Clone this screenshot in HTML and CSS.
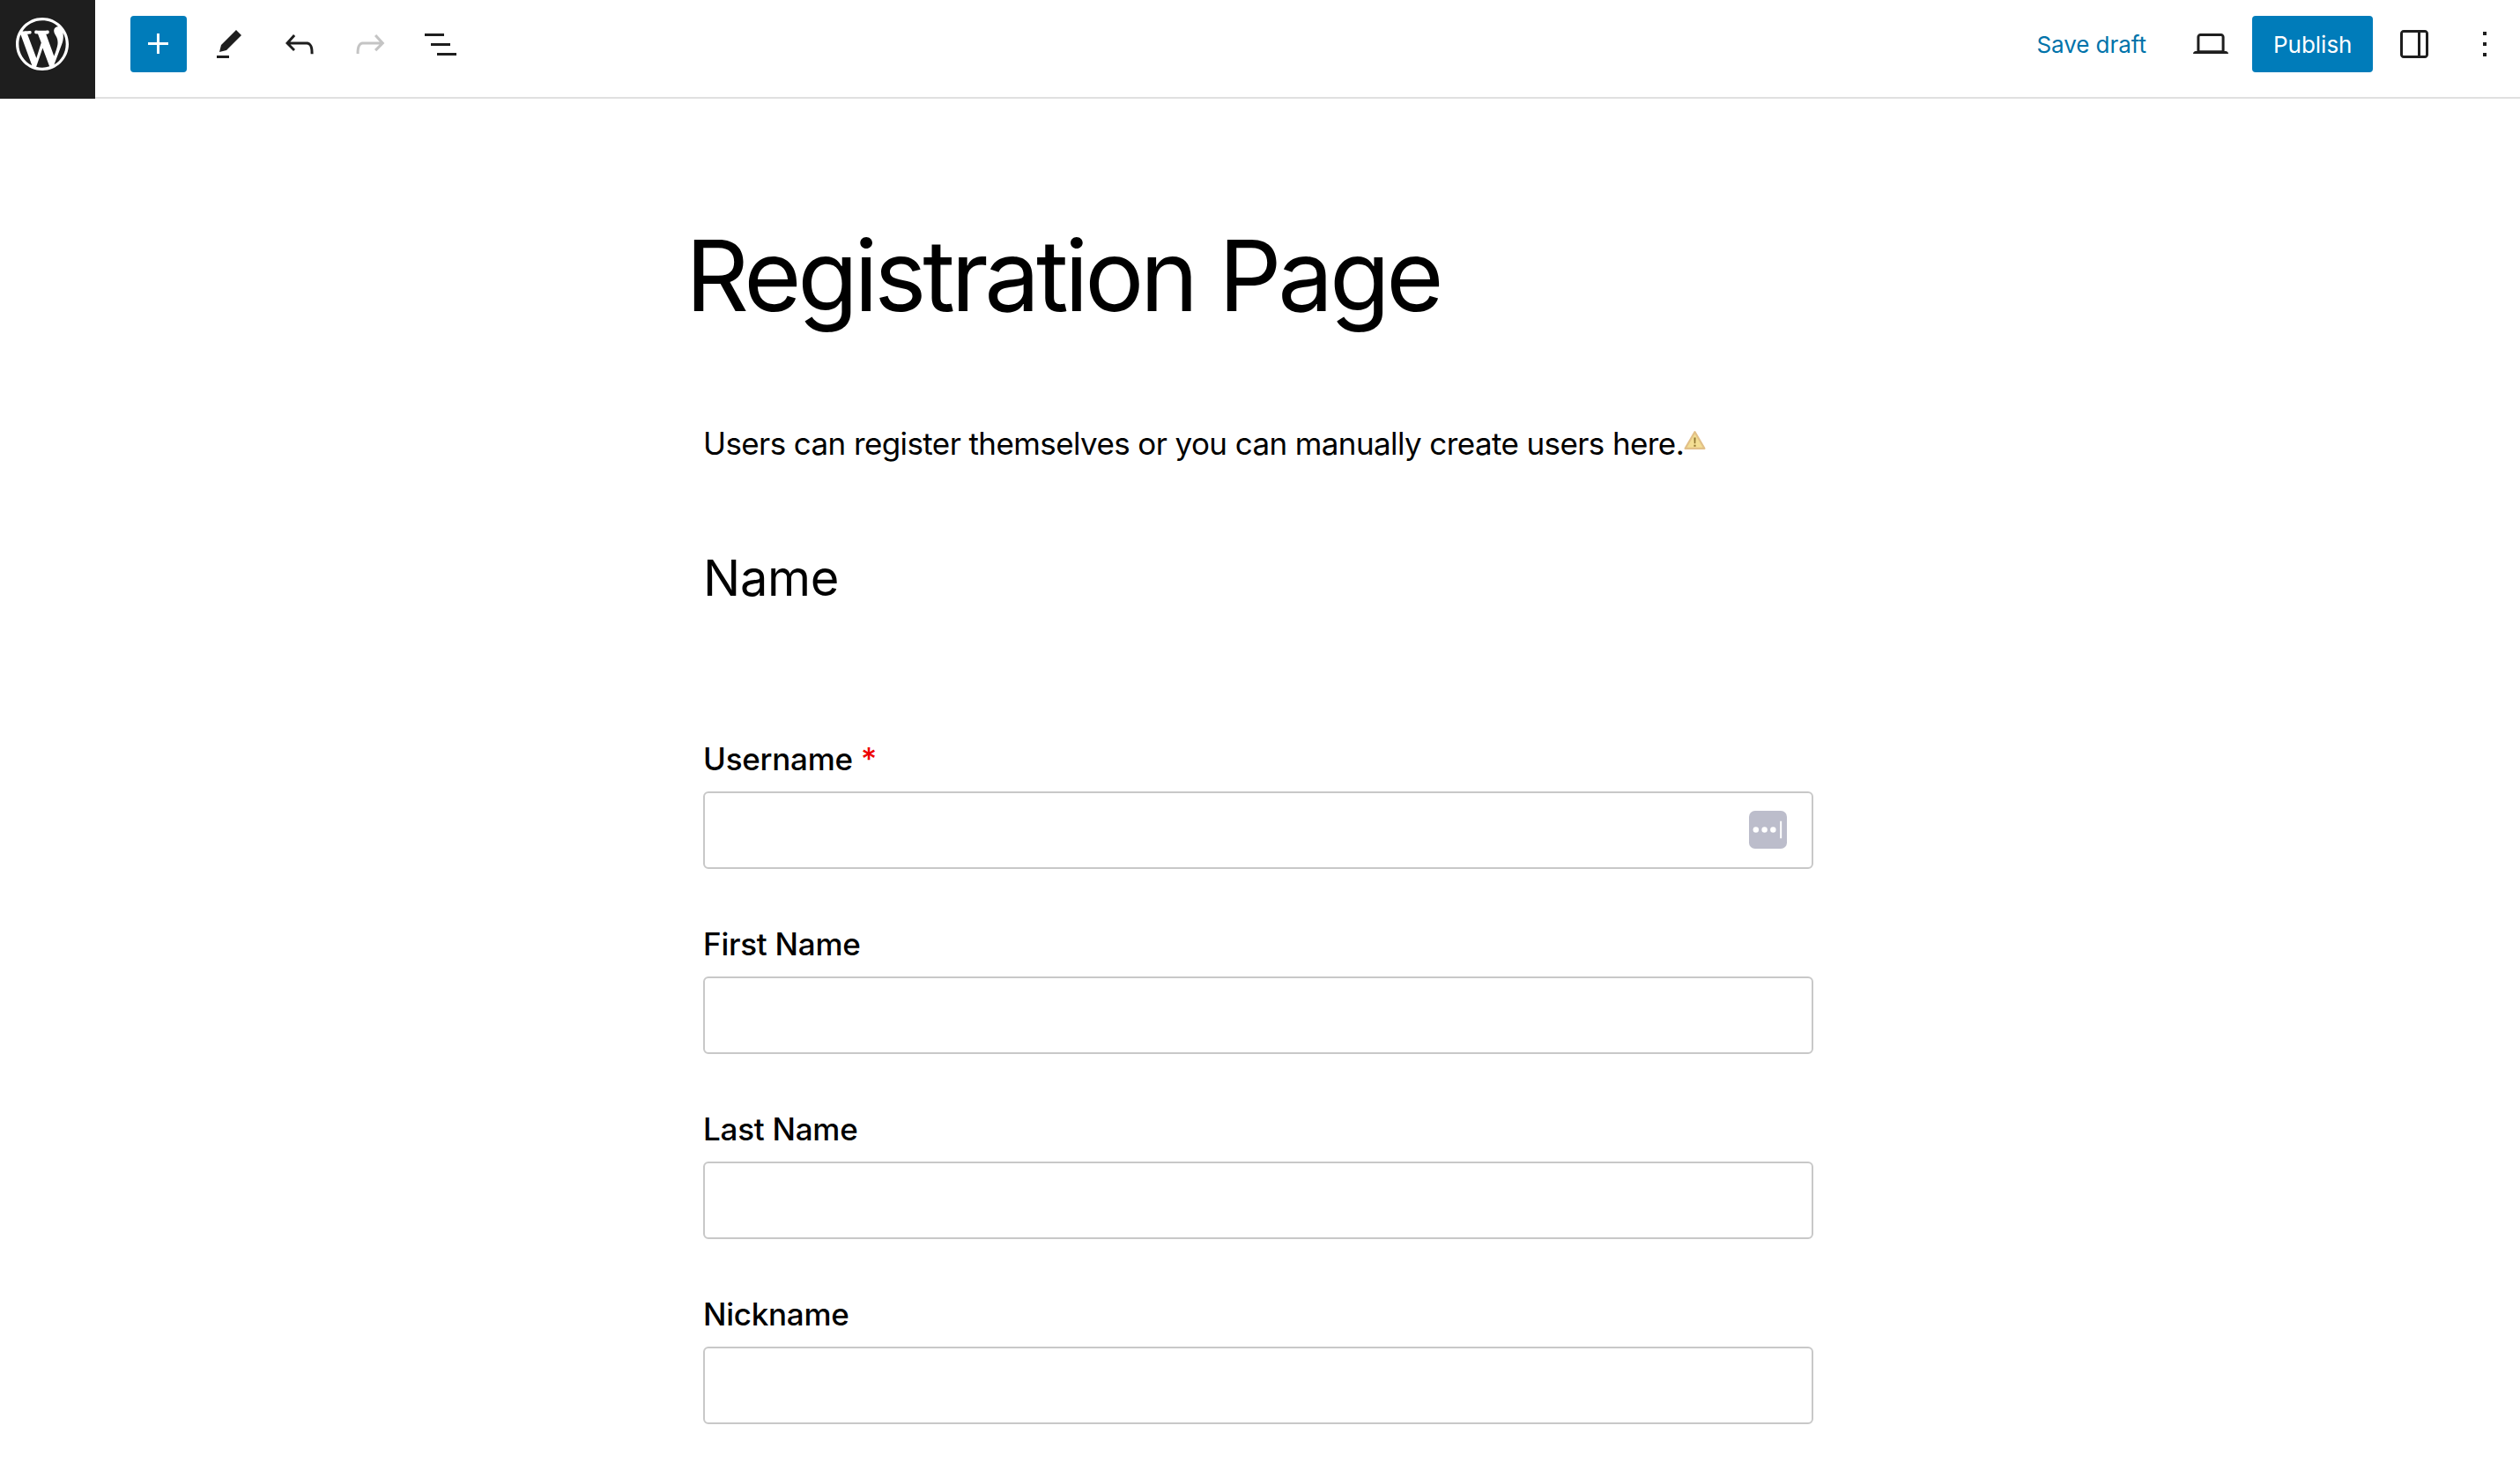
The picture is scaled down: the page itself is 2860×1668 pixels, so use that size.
FILE: index.html
```html
<!DOCTYPE html>
<html>

<head>
    <meta http-equiv="Content-Type" content="text/html; charset=utf-8">
    <title>Registration Page</title>
    <link rel="stylesheet" href="styles.css">
</head>
<body>

<header class="toolbar">
    <a class="wp_logo">
        <svg viewBox="0 0 20 20" width="60" height="60"><path fill="#fff" d="M20 10c0-5.51-4.49-10-10-10C4.48 0 0 4.49 0 10c0 5.52 4.48 10 10 10 5.51 0 10-4.48 10-10zM7.78 15.37L4.37 6.22c.55-.02 1.17-.08 1.17-.08.5-.06.44-1.13-.06-1.11 0 0-1.45.11-2.37.11-.18 0-.37 0-.58-.01C4.12 2.69 6.87 1.11 10 1.11c2.33 0 4.45.87 6.05 2.34-.68-.11-1.65.39-1.65 1.58 0 .74.45 1.36.9 2.1.35.61.55 1.36.55 2.46 0 1.49-1.4 5-1.4 5l-3.03-8.37c.54-.02.82-.17.82-.17.5-.05.44-1.25-.06-1.22 0 0-1.44.12-2.38.12-.87 0-2.33-.12-2.33-.12-.5-.03-.56 1.2-.06 1.22l.92.08 1.26 3.41zM17.41 10c.24-.64.74-1.87.43-4.25.7 1.29 1.05 2.71 1.05 4.25 0 3.29-1.73 6.24-4.4 7.78.97-2.59 1.94-5.2 2.92-7.78zM6.1 18.09C3.12 16.65 1.11 13.53 1.11 10c0-1.3.23-2.48.72-3.59C3.25 10.3 4.67 14.2 6.1 18.09zm4.03-6.63l2.58 6.98c-.86.29-1.76.45-2.71.45-.79 0-1.57-.11-2.29-.33.81-2.38 1.62-4.74 2.42-7.1z"/></svg>
    </a>

    <div class="tools_left">
        <button type="button" class="icon_btn add_btn">
            <svg viewBox="0 0 24 24" width="48" height="48"><path fill="#fff" d="M11 12.5V17.5H12.5V12.5H17.5V11H12.5V6H11V11H6V12.5H11Z"/></svg>
        </button>
        <button type="button" class="icon_btn">
            <svg viewBox="0 0 24 24" width="48" height="48"><path fill="#1e1e1e" d="m19 7-3-3-8.5 8.5-1 4 4-1L19 7Zm-7 11.5H5V20h7v-1.5Z"/></svg>
        </button>
        <button type="button" class="icon_btn">
            <svg viewBox="0 0 24 24" width="48" height="48"><path fill="#1e1e1e" d="M18.3 11.7c-.6-.6-1.4-.9-2.3-.9H6.7l2.9-3.3-1.1-1-4.5 5L8.5 16l1-1-2.7-2.7H16c.5 0 .9.2 1.3.5 1 1 1 3.4 1 4.5v.3h1.5v-.2c0-1.5 0-4.3-1.5-5.7z"/></svg>
        </button>
        <button type="button" class="icon_btn">
            <svg viewBox="0 0 24 24" width="48" height="48"><path fill="#c4c4c4" d="M15.6 6.5l-1.1 1 2.9 3.3H8c-.9 0-1.7.3-2.3.9-1.4 1.5-1.4 4.2-1.4 5.6v.2h1.5v-.3c0-1.1 0-3.5 1-4.5.3-.3.7-.5 1.3-.5h9.2L14.5 15l1.1 1.1 4.6-4.6-4.6-5z"/></svg>
        </button>
        <button type="button" class="icon_btn">
            <svg viewBox="0 0 24 24" width="48" height="48"><path fill="#1e1e1e" d="M3 6h11v1.5H3V6Zm3.5 5.5h11V13h-11v-1.5ZM21 17H10v1.5h11V17Z"/></svg>
        </button>
    </div>

    <div class="tools_right">
        <a class="save_draft">Save draft</a>
        <button type="button" class="icon_btn preview_btn">
            <svg viewBox="0 0 24 24" width="48" height="48"><path fill="#1e1e1e" d="M20.5 16h-.7V8c0-1.1-.9-2-2-2H6.2c-1.1 0-2 .9-2 2v8h-.7c-.8 0-1.5.7-1.5 1.5h20c0-.8-.7-1.5-1.5-1.5zM5.700 8c0-.3.2-.5.5-.5h11.6c.3 0 .5.2.5.5v7.6H5.700V8z"/></svg>
        </button>
        <button type="button" class="publish_btn">Publish</button>
        <button type="button" class="icon_btn sidebar_btn">
            <svg viewBox="0 0 24 24" width="48" height="48"><path fill="#1e1e1e" d="M18 4H6c-1.1 0-2 .9-2 2v12c0 1.1.9 2 2 2h12c1.1 0 2-.9 2-2V6c0-1.1-.9-2-2-2zm-4 14.5H6c-.3 0-.5-.2-.5-.5V6c0-.3.2-.5.5-.5h8v13zm4.500-.5c0 .3-.2.5-.5.5h-2.500v-13H18c.3 0 .5.2.5.5v12z"/></svg>
        </button>
        <button type="button" class="icon_btn more_btn">
            <svg viewBox="0 0 24 24" width="48" height="48"><path fill="#1e1e1e" d="M13 19h-2v-2h2v2zm0-6h-2v-2h2v2zm0-6h-2V5h2v2z"/></svg>
        </button>
    </div>
</header>

<main class="editor">
    <h1 class="page_title">Registration Page</h1>

    <p class="intro">Users can register themselves or you can manually create users here.<svg class="warn_icon" viewBox="0 0 24 24" width="25" height="25"><path fill="#f3de93" stroke="#e2c088" stroke-width="2" stroke-linejoin="round" d="M12 3 22.500 21H1.500Z"/><path fill="#8f7430" d="M11 9h2l-.3 6.500h-1.400ZM11 17h2v2h-2Z"/></svg></p>

    <h2 class="section_title">Name</h2>

    <form class="reg_form">
        <label class="field">
            <span class="field_label">Username <span class="required">*</span></span>
            <span class="input_wrap">
                <input type="text" class="field_input">
                <svg class="autofill_icon" viewBox="0 0 44 44" width="43" height="43">
                    <rect width="44" height="44" rx="7" fill="#bcbdcb"/>
                    <circle cx="8" cy="22" r="3.300" fill="#fff"/>
                    <circle cx="18" cy="22" r="3.300" fill="#fff"/>
                    <circle cx="28" cy="22" r="3.300" fill="#fff"/>
                    <rect x="36" y="12" width="2" height="20" fill="#fff"/>
                </svg>
            </span>
        </label>
        <label class="field">
            <span class="field_label">First Name</span>
            <input type="text" class="field_input">
        </label>
        <label class="field">
            <span class="field_label">Last Name</span>
            <input type="text" class="field_input">
        </label>
        <label class="field">
            <span class="field_label">Nickname</span>
            <input type="text" class="field_input">
        </label>
    </form>
</main>

</body>
</html>
```

FILE: styles.css
```css
html, body {
    height: 100%;
    overflow: hidden;
}

body {
    margin: 0;
    background: #ffffff;
    color: #000000;
    font-family: Inter, "Liberation Sans", sans-serif;
}

.toolbar {
    display: flex;
    align-items: flex-start;
    height: 110px;
    border-bottom: 2px solid #e0e0e0;
    padding-right: 8px;
}

.wp_logo {
    display: flex;
    box-sizing: border-box;
    justify-content: flex-start;
    width: 108px;
    height: 112px;
    padding: 20px 0 0 18px;
    background: #1e1e1e;
}

.tools_left {
    display: flex;
    gap: 16px;
    margin: 18px 0 0 40px;
}

.tools_right {
    display: flex;
    align-items: center;
    margin: 18px 0 0 auto;
}

.icon_btn {
    display: flex;
    align-items: center;
    justify-content: center;
    width: 64px;
    height: 64px;
    padding: 0;
    border: none;
    border-radius: 4px;
    background: none;
}

.add_btn {
    background: #007cba;
}

.save_draft {
    margin-right: 41.5px;
    color: #0073aa;
    font-size: 26px;
    letter-spacing: -0.05px;
}

.preview_btn {
    margin-right: 15px;
}

.publish_btn {
    height: 64px;
    padding: 0 23.5px;
    border: none;
    border-radius: 4px;
    background: #007cba;
    color: #ffffff;
    font-family: inherit;
    font-size: 26px;
}

.sidebar_btn {
    margin-left: 15px;
}

.more_btn {
    margin-left: 16px;
}

.editor {
    width: 1260px;
    margin: 0 auto;
    transform: translateX(-2px);
}

.page_title {
    margin: 133px 0 0 -20px;
    font-size: 112px;
    font-weight: 400;
    line-height: 1.2;
    letter-spacing: -4.3px;
}

.intro {
    margin: 98px 0 0;
    font-size: 35px;
    font-weight: 400;
    line-height: 1.5;
    letter-spacing: -0.6px;
}

.warn_icon {
    vertical-align: 4px;
}

.section_title {
    margin: 93px 0 0;
    font-size: 56px;
    font-weight: 400;
    line-height: 1.2;
    letter-spacing: -0.3px;
}

.reg_form {
    display: flex;
    flex-direction: column;
    gap: 60px;
    margin-top: 146px;
}

.field {
    display: block;
}

.field_label {
    display: block;
    margin-bottom: 12px;
    font-size: 35px;
    font-weight: 500;
    line-height: 50px;
    letter-spacing: -0.25px;
}

.required {
    color: #ee0000;
}

.input_wrap {
    display: block;
    position: relative;
}

.field_input {
    display: block;
    box-sizing: border-box;
    width: 100%;
    height: 88px;
    border: 2px solid #c8c8c8;
    border-radius: 6px;
    background: #ffffff;
}

.autofill_icon {
    position: absolute;
    top: 22px;
    right: 30px;
}
```
